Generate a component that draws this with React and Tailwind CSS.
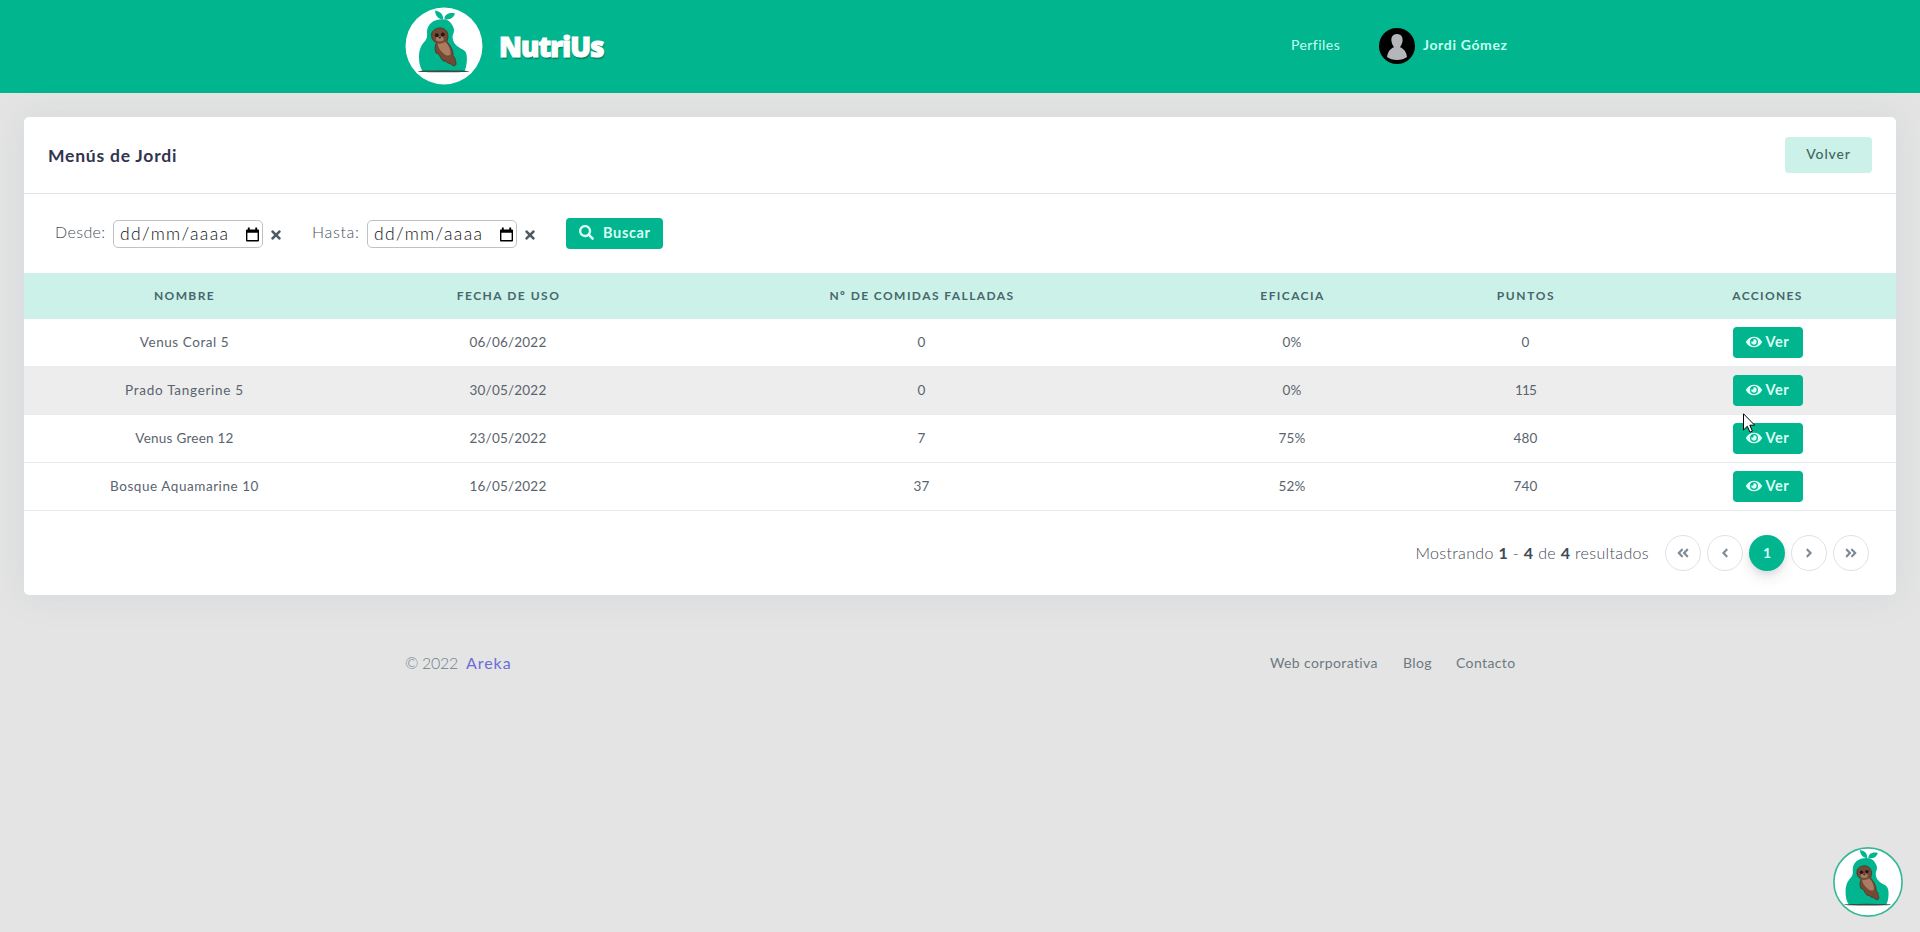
import { FaSearch, FaTimes, FaEye, FaAngleLeft, FaAngleRight, FaAngleDoubleLeft, FaAngleDoubleRight } from "react-icons/fa";

const rows = [
  { name: "Venus Coral 5", tracking: "tracking-[0.55px]", cells: ["06/06/2022", "0", "0%", "0"] },
  { name: "Prado Tangerine 5", tracking: "tracking-[0.72px]", cells: ["30/05/2022", "0", "0%", "115"] },
  { name: "Venus Green 12", tracking: "tracking-[0.25px]", cells: ["23/05/2022", "7", "75%", "480"] },
  { name: "Bosque Aquamarine 10", tracking: "tracking-[0.55px]", cells: ["16/05/2022", "37", "52%", "740"] },
];

const headings = [
  ["Nombre", "tracking-[1.4px]"],
  ["Fecha de uso", "tracking-[1.5px]"],
  ["Nº de comidas falladas", "tracking-[1.42px]"],
  ["Eficacia", "tracking-[1.4px]"],
  ["Puntos", "tracking-[1.6px]"],
  ["Acciones", "tracking-[1.35px]"],
];

const columns = "grid grid-cols-[321px_327px_500px_241px_226px_257px] items-center text-center";

function Mascot({ className, ring }) {
  return (
    <svg viewBox="0 0 78 78" className={className}>
      <circle cx="39" cy="39" r={ring ? 38 : 38.5} fill="#fff" stroke={ring ? "#35b896" : "none"} strokeWidth="1.8" />
      <path d="M38 12.4C33 12 30 8 30.2 3.4C35.5 4.6 38.5 7.5 38 12.4Z" fill="#01b58f" />
      <path d="M39.4 12.2C39.5 7.5 44 5 50 6.6C48.5 11 44.5 13.6 39.4 12.2Z" fill="#01b58f" />
      <path d="M38 12.2C28 12 22 17.5 22 25C22.2 28 22.4 31 20.5 33.5C16 38 14 43 14 50C14 56 15 60 17.5 64.2H59.5C62 59 62.4 51 61.4 47C60.5 43.5 58 42.8 55 41C50 38 48 35 47.6 30.5C47.5 27 50 25 48.6 21C46.5 15 43 12.4 38 12.2Z" fill="#01b58f" />
      <ellipse cx="38.5" cy="64.3" rx="26" ry="1" fill="#354d46" />
      <path d="M28.5 23.5C25.8 25.5 26 31 28.6 33.8C30 35.2 31.2 35.5 31.2 36.5C29.8 39 29.6 43 31 46C33 46.5 34.3 48 35.6 50.5C36.8 53 38.3 54.6 40.5 54.2C42.5 56.5 45 56 46.6 57.5C48 59 50 59.4 50.8 57.8C51.4 56 50.5 54 50 53C51 51.5 49 50.5 48.2 48.5C48 43 45.5 38.5 41.8 34.5C43.5 31 43.5 25.5 40.5 23C37 19.8 31.5 20.5 28.5 23.5Z" fill="#744a35" stroke="#4b3025" strokeWidth=".8" />
      <path d="M32.5 36.5C35.5 37 38.5 36.3 40.3 34.8C44 38.5 46 43 45.5 47.5C43.5 49.5 40.2 48.5 38 46C35.2 43.5 32.8 40.5 32.5 36.5Z" fill="#ab7c61" />
      <ellipse cx="34.8" cy="32" rx="4" ry="2.5" fill="#a47a62" />
      <circle cx="31.8" cy="28.2" r="1.9" fill="#201819" />
      <circle cx="37.8" cy="27.4" r="1.9" fill="#201819" />
      <ellipse cx="34.8" cy="30.6" rx="1.3" ry=".8" fill="#362620" />
    </svg>
  );
}

function DateField({ label, className, labelClass }) {
  return (
    <div className={`flex items-center ${className}`}>
      <span className={`-mt-[4px] font-light whitespace-nowrap text-[#48525c] text-[16px] ${labelClass}`}>{label}</span>
      <div className="mt-[1px] flex h-7 w-[150px] shrink-0 items-center justify-between rounded-[5px] border border-[#bfc2c4] bg-white pr-[3px] pl-[6px]">
        <span className="text-[17.5px] font-light tracking-[1.4px] text-[#101114]">dd/mm/aaaa</span>
        <svg viewBox="0 0 14 15" className="h-[15px] w-[13px]">
          <path fillRule="evenodd" d="M2 0H4V2H10V0H12V2H13Q14 2 14 3V14Q14 15 13 15H1Q0 15 0 14V3Q0 2 1 2H2ZM1.5 5.5V13.5H12.5V5.5Z" fill="#000" />
        </svg>
      </div>
      <FaTimes className="mt-[3px] ml-[6px] size-[14px] text-[#4f5a67]" />
    </div>
  );
}

function PageButton({ children, active }) {
  return (
    <button className={`flex size-9 items-center justify-center rounded-full text-[14px] ${active ? "bg-[#01b58f] pb-[2px] font-bold text-[#d9fff5] shadow-[0_7px_14px_rgba(50,50,93,.1),0_3px_6px_rgba(0,0,0,.08)]" : "border border-[#dee2e6] text-[#808b98]"}`}>
      {children}
    </button>
  );
}

export default function App() {
  return (
    <div className="flex h-[932px] w-[1920px] flex-col overflow-hidden bg-[#e4e4e4] font-['Lato','Noto_Sans',sans-serif] text-[#525f6b]">
      <header className="flex h-[93px] shrink-0 items-center bg-[#01b58f] pr-[405px] pb-[2px] pl-[405px]">
        <Mascot className="size-[78px]" />
        <span className="mt-[2px] ml-[16px] font-['Noto_Sans'] text-[27.5px] leading-none font-black tracking-[-0.9px] text-white [-webkit-text-stroke:1.1px_white] [text-shadow:1px_2px_1px_rgba(0,80,60,.5)]">NutriUs</span>
        <nav className="ml-auto flex items-center text-[14px] text-[#c4fff1]">
          <a className="-mt-[2px] w-[88px] tracking-[0.45px]">Perfiles</a>
          <svg viewBox="0 0 36 36" className="size-9">
            <circle cx="18" cy="18" r="18" fill="#000" />
            <path d="M18 6C13 6 12 10 12.5 13.5C13 16 14 18 15 19C14 20 9 21 8 29Q12 32 18 32T28 29C27 21 22 20 21 19C22 18 23 16 23.5 13.5C24 10 23 6 18 6Z" fill="#b5b6ba" />
          </svg>
          <span className="-mt-[2px] ml-[8px] w-[92px] font-bold tracking-[0.65px] whitespace-nowrap">Jordi Gómez</span>
        </nav>
      </header>

      <main className="mx-6 mt-6 flex h-[478px] shrink-0 flex-col rounded-[5px] bg-white shadow-[0_0_32px_rgba(136,152,170,.17)]">
        <div className="flex h-[77px] shrink-0 items-center justify-between border-b border-[#e3e6e8] pr-6 pl-6">
          <h1 className="mt-[2px] text-[17.5px] font-bold tracking-[0.78px] text-[#32344f]">Menús de Jordi</h1>
          <button className="flex h-9 w-[87px] items-center justify-center rounded-[4px] bg-[#ccf1e9] pb-[3px] text-[14px] font-medium tracking-[0.85px] text-[#44665f]">Volver</button>
        </div>

        <div className="flex h-[79px] shrink-0 items-center pl-[31px]">
          <DateField label="Desde:" className="w-[257px]" labelClass="w-[58px] tracking-[0.4px]" />
          <DateField label="Hasta:" className="w-[254px]" labelClass="w-[55px] tracking-[0.7px]" />
          <button className="flex h-[31px] w-[97px] items-center rounded-[4px] bg-[#01b58f] pb-[2px] pl-[13px] text-[14.5px] font-bold text-[#d9fff5]">
            <FaSearch className="mr-[9px] size-[15px]" />
            <span className="tracking-[0.65px]">Buscar</span>
          </button>
        </div>

        <section>
          <div className={`${columns} h-[46px] bg-[#ccf1e9] text-[12px] font-bold text-[#46676b] uppercase`}>
            {headings.map(([text, tracking]) => (
              <span key={text} className={tracking}>{text}</span>
            ))}
          </div>
          {rows.map(({ name, tracking, cells }, index) => (
            <div key={name} className={`${columns} h-12 border-b border-[#e9ecef] text-[13.5px] text-[#5a646e] ${index === 1 ? "bg-[#ededed]" : ""}`}>
              <span className={tracking}>{name}</span>
              {cells.map((cell, i) => (
                <span key={i} className={cell === "115" ? "pr-px tracking-[-0.8px]" : "pr-px tracking-[0.2px]"}>{cell}</span>
              ))}
              <button className="mx-auto flex h-[31px] w-[70px] items-center rounded-[4px] bg-[#01b58f] pb-[2px] pl-[13px] text-[14.5px] font-bold tracking-[0.5px] text-[#d9fff5]">
                <FaEye className="mr-[4px] size-[16px]" />
                Ver
              </button>
            </div>
          ))}
        </section>

        <div className="flex flex-1 items-center justify-end pr-[27px]">
          <p className="mr-4 text-[16px] font-light tracking-[0.35px] whitespace-nowrap text-[#3f4a55]">
            Mostrando <b className="font-bold">1</b> - <b className="font-bold">4</b> de <b className="font-bold">4</b> resultados
          </p>
          <div className="flex gap-[6px]">
            <PageButton><FaAngleDoubleLeft /></PageButton>
            <PageButton><FaAngleLeft /></PageButton>
            <PageButton active>1</PageButton>
            <PageButton><FaAngleRight /></PageButton>
            <PageButton><FaAngleDoubleRight /></PageButton>
          </div>
        </div>
      </main>

      <footer className="mt-[56px] flex h-6 items-center justify-between pr-[404px] pl-[405px]">
        <div className="flex gap-2 text-[16px]">
          <span className="w-[53px] font-light tracking-[-0.35px] whitespace-nowrap text-[#6f8086]">© 2022</span>
          <a className="tracking-[0.95px] text-[#6b6cd8]">Areka</a>
        </div>
        <nav className="-mt-[2px] flex text-[14px] tracking-[0.38px] whitespace-nowrap text-[#6c7980]">
          <a className="w-[133px]">Web corporativa</a>
          <a className="w-[53px]">Blog</a>
          <a className="w-[60px]">Contacto</a>
        </nav>
      </footer>

      <Mascot ring className="absolute top-[847px] left-[1833px] size-[70px]" />
      <svg viewBox="0 0 12 20" className="absolute top-[413px] left-[1743px] h-[20px] w-[12px]">
        <path d="M.5.8V17L4.3 13.3L7 19.2L9.4 18L6.8 12.2H11.7Z" fill="#fff" stroke="#000" strokeWidth="1" />
      </svg>
    </div>
  );
}
